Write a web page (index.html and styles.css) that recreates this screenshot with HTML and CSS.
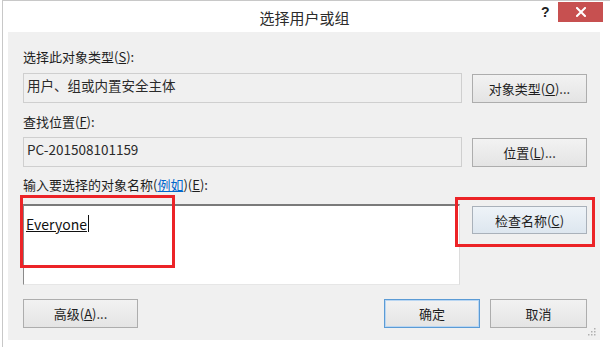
FILE: index.html
```html
<!DOCTYPE html>
<html lang="zh-CN">
<head>
<meta charset="utf-8">
<title>选择用户或组</title>
<link rel="stylesheet" href="styles.css">
</head>
<body>
<div class="window">
  <div class="titlebar">
    <span class="title">选择用户或组</span>
    <span class="help">?</span>
    <span class="close"><svg width="10" height="10" viewBox="0 0 10 10"><path d="M1 1L9 9M9 1L1 9" stroke="#fff" stroke-width="2" stroke-linecap="square"/></svg></span>
  </div>
  <div class="client">
    <div class="label l1">选择此对象类型(<u>S</u>):</div>
    <div class="row">
      <div class="field">用户、组或内置安全主体</div>
      <div class="btn">对象类型(<u>O</u>)...</div>
    </div>
    <div class="label l2">查找位置(<u>F</u>):</div>
    <div class="row">
      <div class="field">PC-201508101159</div>
      <div class="btn">位置(<u>L</u>)...</div>
    </div>
    <div class="label l3">输入要选择的对象名称(<span class="link">例如</span>)(<u>E</u>):</div>
    <div class="row big">
      <div class="editor"><span class="typed">Everyone</span><span class="caret"></span></div>
      <div class="side"><div class="btn check">检查名称(<u>C</u>)</div></div>
    </div>
    <div class="footer">
      <div class="btn wide">高级(<u>A</u>)...</div>
      <div class="spacer"></div>
      <div class="btn ok">确定</div>
      <div class="btn cancel">取消</div>
    </div>
    <div class="mark mark1"></div>
    <div class="mark mark2"></div>
    <svg class="grip" width="8" height="8" viewBox="0 0 8 8"><g fill="#b0b0b0"><rect x="6" y="0" width="1.5" height="1.5"/><rect x="3" y="3" width="1.5" height="1.5"/><rect x="6" y="3" width="1.5" height="1.5"/><rect x="0" y="6" width="1.5" height="1.5"/><rect x="3" y="6" width="1.5" height="1.5"/><rect x="6" y="6" width="1.5" height="1.5"/></g></svg>
  </div>
</div>
</body>
</html>
```
FILE: styles.css
```css
* { box-sizing: border-box; }
html, body { margin: 0; padding: 0; background: #fff; }
body {
  font-family: "Microsoft YaHei", "Noto Sans CJK SC", "Noto Sans", sans-serif;
  font-size: 13px;
  color: #1e1e1e;
  width: 610px;
  height: 347px;
  overflow: hidden;
}
.window {
  width: 610px;
  height: 347px;
  border-top: 1px solid #c8c8c8;
  border-left: 1px solid #c8c8c8;
  margin-left: 2px;
  display: flex;
  flex-direction: column;
  position: relative;
}
.titlebar {
  height: 31px;
  position: relative;
  display: flex;
  justify-content: center;
  align-items: center;
}
.title { font-size: 15px; color: #2b2b2b; margin-right: 6px; margin-top: 1px; }
.help {
  position: absolute;
  left: 538px;
  top: 3px;
  font-family: "Liberation Sans", sans-serif;
  font-weight: bold;
  font-size: 14px;
  color: #222;
}
.close {
  position: absolute;
  left: 555px;
  top: 1px;
  width: 45px;
  height: 20px;
  background: #c75050;
  display: flex;
  align-items: center;
  justify-content: center;
}
.client {
  margin-left: 5px;
  width: 592px;
  height: 308px;
  background: #f0f0f0;
  padding: 0 13px 0 15px;
  display: flex;
  flex-direction: column;
  position: relative;
}
.label { height: 18px; line-height: 18px; }
.l1 { margin-top: 16px; margin-bottom: 7px; }
.l2 { margin-top: 10px; margin-bottom: 6px; }
.l3 { margin-top: 9px; margin-bottom: 10px; }
.link { color: #0066cc; text-decoration: underline; }
.row {
  display: flex;
  gap: 10px;
}
.field {
  flex: 1;
  height: 30px;
  border: 1px solid #cfcfcf;
  background: #f0f0f0;
  padding: 1px 3px 0;
  line-height: 20px;
  font-size: 13.5px;
  color: #2a2a2a;
}
.btn {
  width: 115px;
  height: 30px;
  border: 1px solid #adadad;
  background: linear-gradient(#f2f2f2, #e4e4e4);
  display: flex;
  align-items: center;
  justify-content: center;
  color: #1e1e1e;
  flex: none;
}
.row .btn { margin-top: 1px; height: 29px; }
.big { height: 81px; }
.editor {
  width: 437px;
  flex: none;
  background: #fff;
  border-top: 2px solid #7a7a7a;
  border-left: 1px solid #8a8a8a;
  border-right: 1px solid #dcdcdc;
  border-bottom: 1px solid #e6e6e6;
  padding: 9px 2px 0;
  display: flex;
  align-items: flex-start;
  font-size: 14px;
  line-height: 18px;
}
.typed { text-decoration: underline; color: #111; }
.caret { width: 1px; height: 17px; background: #111; margin-left: 1px; }
.side { flex: 1; display: flex; justify-content: flex-end; }
.row .check {
  margin-top: 2px;
  height: 28px;
  background: linear-gradient(#eef3f8, #dde6ef);
  border-color: #a9b1ba;
}
.footer {
  margin-top: 14px;
  display: flex;
  gap: 10px;
}
.footer .btn { height: 29px; }
.wide { width: 115px; }
.spacer { flex: 1; }
.ok { width: 96px; border-color: #5b9bd5; box-shadow: inset 0 0 0 1px #b9d6f2; }
.cancel { width: 97px; }
.mark {
  position: absolute;
  border: 3px solid #ec2327;
  pointer-events: none;
}
.mark1 { left: 12px; top: 163px; width: 155px; height: 73px; }
.mark2 { left: 447px; top: 165px; width: 140px; height: 50px; }
.grip { position: absolute; right: 4px; bottom: 4px; }
```
